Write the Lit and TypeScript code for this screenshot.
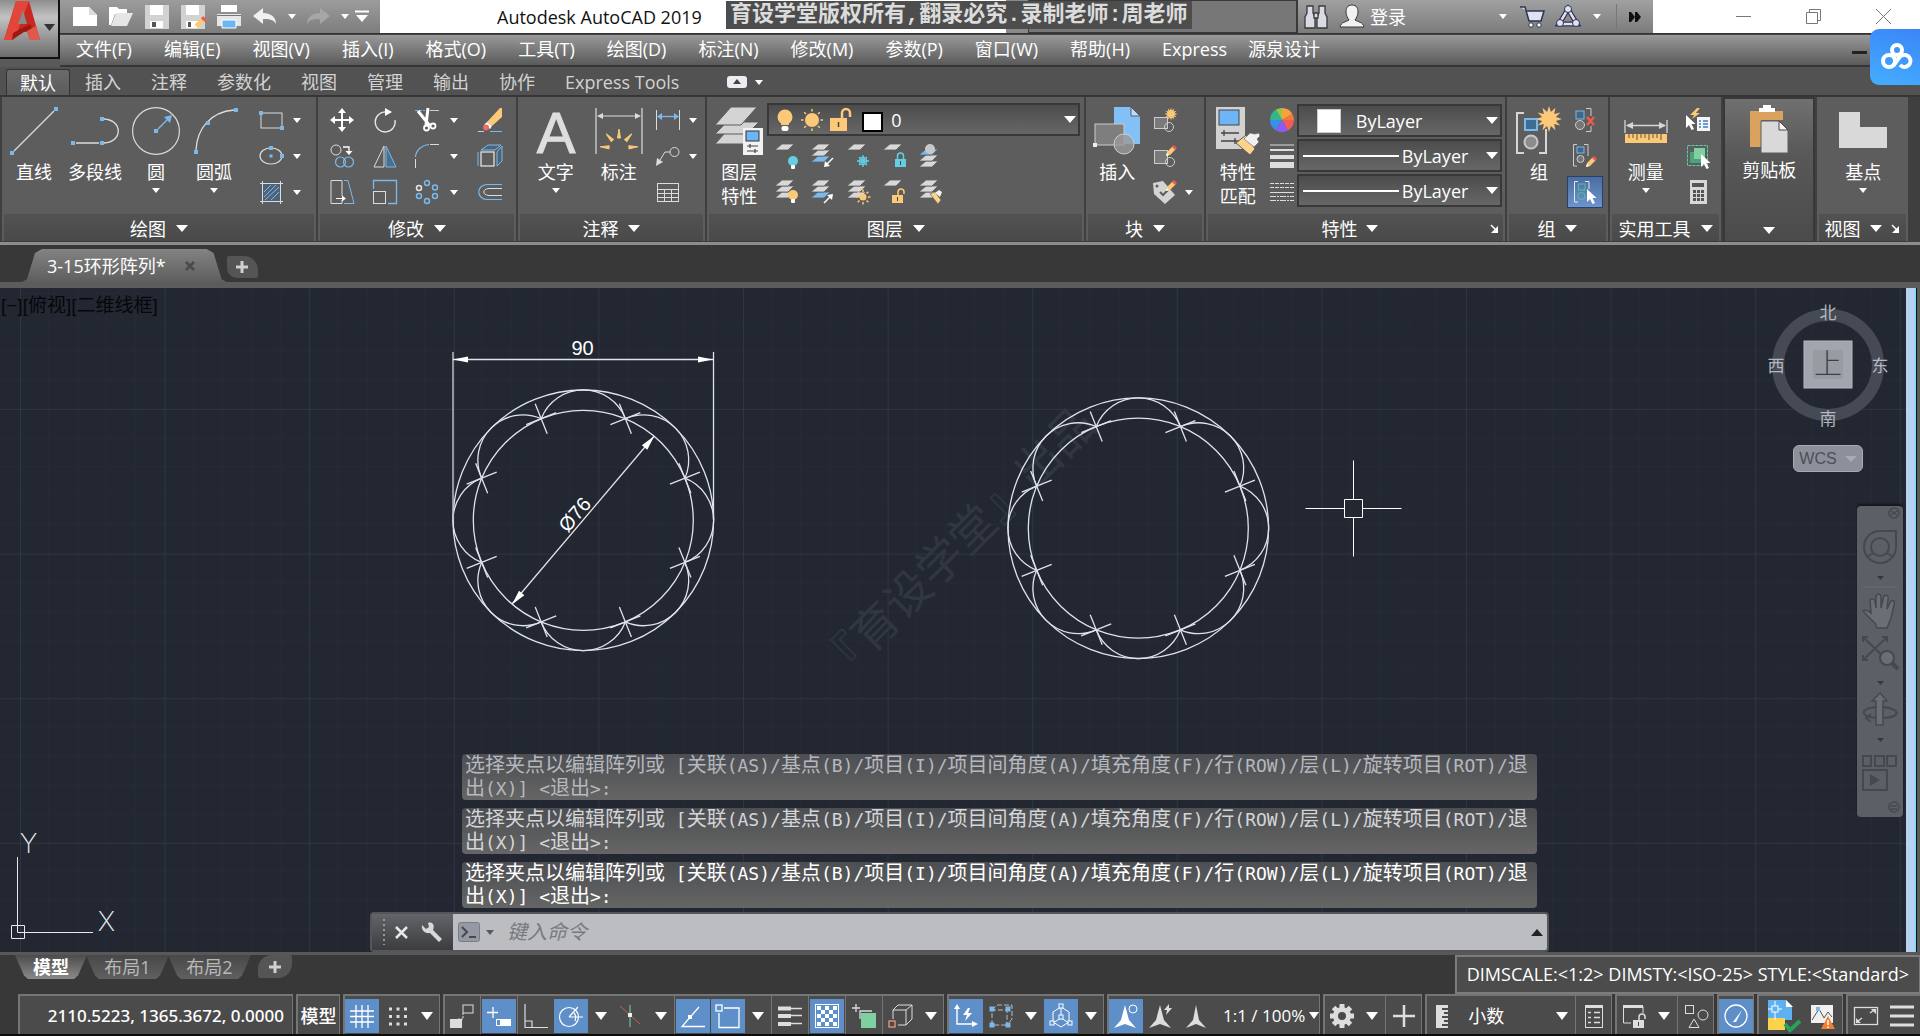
import { LitElement, html, svg, css, nothing } from "lit";
import { customElement } from "lit/decorators.js";
import { classMap } from "lit/directives/class-map.js";

/* ---------- small drawing helpers ---------- */
const sq = (x: number, y: number, s = 4) => svg`<rect x=${x - s / 2} y=${y - s / 2} width=${s} height=${s} fill="#7ab9ee"/>`;
const sheet = (y: number, c = "#d8d8d8") => svg`<path d=${`M8 ${y}H20L14 ${y + 6}H1Z`} fill=${c} stroke="#5d5d5d" stroke-width=".8"/>`;
const sheets = svg`${sheet(12)}${sheet(6)}${sheet(0)}`;
const pencil = (x: number, y: number) => svg`<g transform=${`translate(${x} ${y})`}><path d="M0 11L1 7L7 1L10 4L4 10Z" fill="#fbc978"/><path d="M6 2L8 0L11 3L9 5Z" fill="#ee5b4c"/><path d="M0 11L1 8L3 10Z" fill="#fff"/></g>`;
const star = (x: number, y: number, r: number) => {
  const pts = Array.from({ length: 24 }, (_, i) => {
    const a = (i * Math.PI) / 12;
    const q = i % 2 ? r * 0.55 : r;
    return `${(x + q * Math.sin(a)).toFixed(1)},${(y - q * Math.cos(a)).toFixed(1)}`;
  }).join(" ");
  return svg`<polygon points=${pts} fill="#fbc978"/>`;
};
const cursor = (x: number, y: number) => svg`<path transform=${`translate(${x} ${y})`} d="M0 0V13L3 10L5.5 15L8 14L5.500 9H9.500Z" fill="#fff"/>`;
const lock = (x: number, y: number, c: string, open = false) => svg`<g transform=${`translate(${x} ${y})`}><rect x="0" y="6" width="11" height="8" fill=${c}/><path d=${open ? "M6 6V3a2.500 2.500 0 0 1 6 0V5" : "M2.500 6V3a3 3 0 0 1 6 0V6"} fill="none" stroke=${c} stroke-width="1.500"/><path d="M5.500 8V12" stroke="#444"/></g>`;
const bulb = (x: number, y: number, c: string) => svg`<circle cx=${x} cy=${y} r="5" fill=${c}/><rect x=${x - 2} y=${y + 4} width="4" height="4" rx="1" fill="#fff"/>`;
const rays = (x: number, y: number, r: number, c: string) => svg`<circle cx=${x} cy=${y} r=${r} fill=${c}/>${[0, 1, 2, 3, 4, 5, 6, 7].map(
  (i) => svg`<path d=${`M${x} ${y - r - 1.500}V${y - r - 4}`} stroke=${c} stroke-width="1.500" transform=${`rotate(${i * 45} ${x} ${y})`}/>`
)}`;

/* ---------- 48px ribbon icons ---------- */
const big: Record<string, unknown> = {
  line: svg`<path d="M4 44L44 4" stroke="#dcdcdc" stroke-width="1.300"/>${sq(46, 2)}${sq(2, 46)}`,
  pline: svg`<path d="M5 36H28M33 12C52 13 52 35 33 36" fill="none" stroke="#dcdcdc" stroke-width="1.300"/>${sq(2, 36)}${sq(31, 36)}${sq(31, 12)}`,
  circle: svg`<circle cx="24" cy="24" r="23.400" fill="none" stroke="#dcdcdc" stroke-width="1.200"/>${sq(24, 24)}<path d="M26 22L37 11" stroke="#7ab9ee" stroke-width="1.400"/><path d="M40 8L38 16L32 10Z" fill="#7ab9ee"/>`,
  arc: svg`<path d="M6 43C7 22 20 5 44 3" fill="none" stroke="#dcdcdc" stroke-width="1.300"/>${sq(6, 45)}${sq(18, 16)}${sq(46, 3)}`,
  text: svg`<text x="24" y="46" text-anchor="middle" font-family="Liberation Sans, sans-serif" font-size="58" fill="#dedede" stroke="#dedede">A</text>`,
  dim: svg`<path d="M1 1V47M47 1V47M4 9H44" stroke="#dcdcdc" stroke-width="1.200"/><path d="M2 9L8 6V12ZM46 9L40 6V12Z" fill="#dcdcdc"/><g fill="#fbc978">${[-86, -42, 0, 42, 86].map((a) => svg`<path d="M22.500 31L24 22L25.500 31Z" stroke="#fbc978" transform=${`rotate(${a} 24 41)`}/>`)}</g>`,
  layers: svg`<g fill="#d4d4d4" stroke="#5d5d5d"><path d="M10 26H42L32 37H0Z"/><path d="M12 15H44L32 27H0Z"/><path d="M16 0H42L26 18H0Z"/></g><rect x="28" y="21" width="20" height="27" fill="#f2f2f2"/><rect x="31" y="24" width="13" height="10" fill="#6cb6f5" stroke="#333"/><path d="M32 39H43M32 44H43M35 37V41M40 42V46" stroke="#444" stroke-width="1.200"/>`,
  insert: svg`<path d="M21 0H38L47 9V37H21Z" fill="#82c0f6"/><path d="M38 0V9H47Z" fill="#b9dcfa" stroke="#5d5d5d"/><rect x="2" y="17" width="29" height="21" fill="#7e7e7e" stroke="#ccc"/><circle cx="31" cy="37" r="10" fill="#9a9a9a" fill-opacity=".8" stroke="#ccc"/><rect x="0" y="36" width="4" height="4" fill="#eee"/>`,
  match: svg`<rect x="2" y="0" width="29" height="42" fill="#d2d2d2"/><rect x="5" y="3" width="20" height="15" fill="#6cb6f5" stroke="#444"/><path d="M7 26H25M10 23V29M7 34H25M21 31V37" stroke="#444" stroke-width="1.300"/><path d="M22 36L32 28L41 42L36 48Z" fill="#fbd38a" stroke="#5d5d5d"/><path d="M30 32L36 26L41 27L45 26L46 29L43 32L45 35L40 40Z" fill="#f0f0f0" stroke="#5d5d5d" stroke-width=".6"/>`,
  group: svg`<path d="M9 6H2V46H9M24 46H31V22" fill="none" stroke="#d6d6d6" stroke-width="2"/><rect x="10" y="12" width="12" height="11" fill="#3f6c93" stroke="#79b8ea" stroke-width="2"/><circle cx="16" cy="35" r="6.500" fill="#8c8c8c" stroke="#c8c8c8" stroke-width="2"/>${star(34, 12, 13)}`,
  measure: svg`<path d="M3 13V26M45 13V26M5 18.500H43" stroke="#d6d6d6" stroke-width="1.300"/><path d="M4 18.500L11 15V22ZM44 18.500L37 15V22Z" fill="#d6d6d6"/><rect x="3" y="27" width="42" height="9" fill="#fbc978"/><path d="M7 27V31M11 27V31M15 27V33M19 27V31M23 27V31M27 27V33M31 27V31M35 27V31M39 27V33" stroke="#6b5430"/>`,
  paste: svg`<path d="M5 5H38V14H16V41H5Z" fill="#d9a35f"/><path d="M14 6V2H18V-1H26V2H30V6Z" fill="#fff"/><path d="M16 15H34L43 24V47H16Z" fill="#d9d9d9" stroke="#5d5d5d"/><path d="M34 15L43 24H34Z" fill="#f6f6f6" stroke="#444"/>`,
  base: svg`<path d="M0 5H21V20H48V41H0Z" fill="#d9d9d9"/>`,
};

/* ---------- 24px ribbon icons ---------- */
const small: Record<string, unknown> = {
  rect: svg`<rect x="2" y="5" width="21" height="15" fill="none" stroke="#dcdcdc"/>${sq(2, 5)}${sq(23, 20)}`,
  ellipse: svg`<ellipse cx="12" cy="12" rx="11" ry="8" fill="none" stroke="#dcdcdc" stroke-width="1.200"/>${sq(12, 4)}${sq(12, 12, 3)}${sq(23, 12)}`,
  hatch: svg`<rect x="4" y="4" width="17" height="17" fill="#4d6478"/><path d="M5 12L12 5M5 17L17 5M6 20L20 7M12 20L20 12" stroke="#7ab9ee"/><path d="M1 3.500H24M1 21.500H24M3.500 1V24M21.500 1V24" stroke="#dcdcdc"/>`,
  move: svg`<path d="M12 3V21M3 12H21" stroke="#fff" stroke-width="2"/><path d="M12 0L16 5H8ZM12 24L16 19H8ZM0 12L5 8V16ZM24 12L19 8V16Z" fill="#fff"/>`,
  rotate: svg`<path d="M13 4A10 10 0 1 0 22 12" fill="none" stroke="#e8e8e8" stroke-width="1.300"/><path d="M12 0L19 4L12 8Z" fill="#fff"/>`,
  trim: svg`<path d="M0 2.500H10" stroke="#7ab9ee" stroke-dasharray="3 1"/><path d="M15 2.500H24" stroke="#ccc"/><path d="M3 3L15 18M13 0L11 17" stroke="#fff" stroke-width="3"/><circle cx="11.500" cy="20" r="2.500" fill="none" stroke="#fff" stroke-width="1.800"/><circle cx="18" cy="18" r="2.500" fill="none" stroke="#fff" stroke-width="1.800"/>`,
  erase: svg`<path d="M9 14L22 0H24V9L14 18Z" fill="#fbc978"/><path d="M9 14L14 18L12 21L6 17Z" fill="#fff"/><circle cx="8" cy="19.500" r="3" fill="#ee6a62"/><path d="M0 23.500H6" stroke="#ccc"/><path d="M12 23.500H24" stroke="#7ab9ee"/>`,
  copy: svg`<circle cx="6" cy="6" r="5" fill="none" stroke="#dcdcdc"/><path d="M13 3H19V8" fill="none" stroke="#fff" stroke-width="1.300"/><path d="M15.500 7H22.500L19 11Z" fill="#fff"/><circle cx="10.500" cy="18" r="5" fill="none" stroke="#7ab9ee" stroke-width="1.200"/><circle cx="18.500" cy="18" r="5" fill="none" stroke="#7ab9ee" stroke-width="1.200"/>`,
  mirror: svg`<path d="M11 2V23H1Z" fill="none" stroke="#dcdcdc"/><path d="M13 2V23H23Z" fill="#48718f" stroke="#7ab9ee"/>`,
  fillet: svg`<path d="M15 .500H24M.500 15V24" stroke="#dcdcdc"/><path d="M.500 13C1 6 7 1 14 .500" fill="none" stroke="#7ab9ee" stroke-width="1.200"/>`,
  box3d: svg`<path d="M3 6L10 1H23L17 6ZM19 8L24 2V17L19 22ZM0 8V22" fill="#4d6478" stroke="#7ab9ee"/><rect x="3" y="8" width="13" height="14" fill="#5d5d5d" stroke="#e0e0e0" stroke-width="1.300"/>`,
  stretch: svg`<path d="M1 .500H12V16M12 20V23.500H1V.500" fill="none" stroke="#dcdcdc"/><path d="M14 .500H18L24 23.500H14" fill="none" stroke="#7ab9ee"/><path d="M6 18.500H13" stroke="#fff"/><path d="M12 15.500L16 18.500L12 21.500Z" fill="#fff"/>`,
  scale: svg`<path d="M.500 9V.500H23.500V23.500H15" fill="none" stroke="#7ab9ee" stroke-width="1.300"/><rect x=".500" y="11.500" width="12" height="12" fill="none" stroke="#dcdcdc"/>`,
  array: svg`<g fill="none" stroke="#7ab9ee" stroke-width="1.500"><circle cx="12" cy="3" r="2.500"/><circle cx="20" cy="7.500" r="2.500"/><circle cx="20" cy="16" r="2.500"/><circle cx="12" cy="21" r="2.500"/><circle cx="4" cy="16" r="2.500"/><circle cx="4" cy="8" r="2.500" stroke="#e6e6e6"/></g>`,
  offset: svg`<path d="M24 4.500H9C-2 5-2 19 9 19.500H24" fill="none" stroke="#7ab9ee" stroke-width="1.200"/><path d="M24 8.500H11C4 9 4 15 11 15.500H24" fill="none" stroke="#dcdcdc"/>`,
  linear: svg`<path d="M.500 2V22M23.500 2V22" stroke="#dcdcdc"/><path d="M4 8.500H20" stroke="#7ab9ee" stroke-width="1.300"/><path d="M1 8.500L6 5V12ZM23 8.500L18 5V12Z" fill="#7ab9ee"/>`,
  leader: svg`<circle cx="18.500" cy="8" r="4.500" fill="none" stroke="#dcdcdc"/><path d="M14 8H9L4 16" fill="none" stroke="#dcdcdc"/><path d="M0 22L1 14L7 18Z" fill="#dcdcdc"/>`,
  table: svg`<rect x="1.500" y="3.500" width="21" height="18" fill="none" stroke="#dcdcdc"/><path d="M1 9.500H23M1 13.500H23M1 17.500H23M8.500 9V21M15.500 9V21" stroke="#dcdcdc"/>`,
  lyOff: svg`${sheet(0)}${bulb(19, 17, "#63cfe0")}`,
  lyIso: svg`${sheet(12, "#7ab9ee")}${sheet(6)}${sheet(0)}<path d="M23 14L16 21" stroke="#fff" stroke-width="1.500"/><path d="M14 23L15 17L20 22Z" fill="#fff"/>`,
  lyFrz: svg`${sheet(0)}<g stroke="#63cfe0" stroke-width="1.300" fill="none"><circle cx="17" cy="17" r="3.500"/><path d="M17 11V23M11 17H23M13 13L21 21M21 13L13 21"/></g>`,
  lyLock: svg`${sheet(0)}${lock(13, 9, "#63cfe0")}`,
  lyCur: svg`${sheet(17)}${sheet(11)}${sheet(5, "#7ab9ee")}<circle cx="12" cy="5" r="5" fill="#c8c8c8"/>`,
  lyOn: svg`${sheets}${bulb(19, 15, "#fbc978")}`,
  lyUni: svg`${sheet(12, "#7ab9ee")}${sheet(6)}${sheet(0)}<path d="M14 23L21 16" stroke="#fff" stroke-width="1.500"/><path d="M23 14L22 20L17 15Z" fill="#fff"/>`,
  lyThaw: svg`${sheets}${rays(17, 17, 3.500, "#fbc978")}`,
  lyUnl: svg`${sheet(0)}${lock(10, 9, "#fbc978", true)}`,
  lyMatch: svg`${sheets}<path d="M12 14L17 12L23 20L20 24Z" fill="#fbd38a" stroke="#5d5d5d" stroke-width=".6"/><path d="M17 13L21 10L24 12L22 17Z" fill="#f0f0f0"/>`,
  blkNew: svg`<rect x="1.500" y="9.500" width="13" height="11" fill="#7a7a7a" stroke="#ccc"/><circle cx="16" cy="19" r="4.500" fill="none" stroke="#ccc"/>${star(18, 6, 6.500)}`,
  blkEdit: svg`<rect x="1.500" y="6.500" width="13" height="13" fill="#7a7a7a" stroke="#ccc"/><circle cx="17" cy="18" r="4.500" fill="none" stroke="#ccc"/>${pencil(13, 1)}`,
  blkAttr: svg`<path d="M0 3L10 1L22 15L12 24L1 14Z" fill="#d4d4d4"/><circle cx="4" cy="6" r="1.500" fill="#5d5d5d"/><path d="M7 12L10 15L15 10" fill="none" stroke="#5d5d5d" stroke-width="2"/>${pencil(13, 0)}`,
  wheel: svg`<path d="M12 12V0A12 12 0 0 1 22.400 6Z" fill="#f8a23c"/><path d="M12 12L22.400 6A12 12 0 0 1 24 12Z" fill="#f07a3c"/><path d="M12 12H24A12 12 0 0 1 18 22.400Z" fill="#f25c54"/><path d="M12 12L18 22.400A12 12 0 0 1 6 22.400Z" fill="#8b5cf0"/><path d="M12 12L6 22.400A12 12 0 0 1 0 12Z" fill="#3b8de8"/><path d="M12 12H0A12 12 0 0 1 6 1.600Z" fill="#35b58c"/><path d="M12 12L6 1.600A12 12 0 0 1 12 0Z" fill="#8fc94c"/>`,
  weights: svg`<path d="M0 1H24" stroke="#ddd"/><path d="M0 6H24" stroke="#ddd" stroke-width="2"/><path d="M0 13H24" stroke="#ddd" stroke-width="4"/><path d="M0 21H24" stroke="#ddd" stroke-width="6"/>`,
  types: svg`<path d="M0 3.500H24M0 7.500H24" stroke="#ddd" stroke-dasharray="4 1"/><path d="M0 12.500H24" stroke="#ddd"/><path d="M0 16.500H24M0 20.500H24" stroke="#ddd" stroke-dasharray="6 1 2 1"/>`,
  ungroup: svg`<path d="M13 .500H18V8M18 18V23.500H13" fill="none" stroke="#ccc"/><rect x="3" y="3" width="8" height="8" fill="#3e6788" stroke="#7ab9ee"/><circle cx="7" cy="17" r="4.500" fill="#777" stroke="#ccc"/><path d="M14 9L21 17M21 9L14 17" stroke="#ee5b4c" stroke-width="2.500"/>`,
  grpEdit: svg`<path d="M4 .500H.500V22H4M11 .500H15V12" fill="none" stroke="#ccc"/><rect x="4" y="3" width="7" height="6" fill="#3e6788" stroke="#7ab9ee"/><circle cx="7.500" cy="15" r="3.500" fill="#777" stroke="#ccc"/>${pencil(13, 12)}`,
  grpSel: svg`<path d="M5 1.500H1.500V22H5M12 1.500H16V9" fill="none" stroke="#e6e6e6"/><rect x="5.500" y="4" width="6.500" height="6" fill="none" stroke="#4fc3a0"/><circle cx="8.500" cy="16" r="3.500" fill="none" stroke="#4fc3a0"/>${cursor(14, 9)}`,
  quick: svg`<rect x="11" y="9" width="13" height="14" fill="#f4f4f4"/><path d="M13 13H15M13 16H15M13 19H15M17 13H22M17 16H22M17 19H22" stroke="#3b7fc4" stroke-width="1.500"/>${cursor(0, 7)}<path d="M11 0L4 7H8L6 11L14 5H10L14 0Z" fill="#fbc978"/>`,
  selAll: svg`<rect x="1.500" y="1.500" width="20" height="20" fill="none" stroke="#5fd0a0" stroke-dasharray="3 1"/><rect x="4" y="8" width="12" height="11" fill="#4aa37a"/><rect x="8" y="4" width="11" height="11" fill="#7ed0a0"/>${cursor(15, 10)}`,
  calc: svg`<rect x="4" y="0" width="17" height="24" fill="#d8d8d8"/><rect x="6" y="3" width="12" height="4" fill="#555"/><g fill="#555">${[10, 14, 18].map((y) => [7, 11, 15].map((x) => svg`<rect x=${x} y=${y} width="3" height="3"/>`))}</g>`,
};

/* ---------- status bar and title icons, 24px ---------- */
const ui: Record<string, unknown> = {
  grid: svg`<path d="M0 7H24M0 12.500H24M0 18H24M6 1V24M12 1V24M18 1V24" stroke="#fff" stroke-width="1.300"/>`,
  dots: svg`<path d="M4 5H22M4 12.500H22M4 20H22" stroke="#ddd" stroke-width="3" stroke-dasharray="3 4.500"/>`,
  infer: svg`<rect x="13" y="1" width="10" height="8" fill="none" stroke="#ddd"/><path d="M13 9V15H7" fill="none" stroke="#ddd" stroke-dasharray="2 1"/><rect x="0" y="15" width="12" height="9" fill="#ddd"/>`,
  dyn: svg`<path d="M6 3V14M0 8.500H11" stroke="#fff" stroke-width="1.300"/><rect x="9" y="15" width="15" height="7" fill="#fff"/><rect x="10" y="16" width="3" height="5" fill="#5f8fc8"/>`,
  ortho: svg`<path d="M1 0V23.500H24M1 17H8V23" fill="none" stroke="#ddd" stroke-width="1.200"/>`,
  polar: svg`<circle cx="10" cy="13" r="9.500" fill="none" stroke="#fff" stroke-width="1.200"/><path d="M10 13H24M10 13L19 3M15 9C17 11 17 14 16 17" fill="none" stroke="#fff" stroke-width="1.200"/>`,
  iso: svg`<path d="M1 2L21 20" stroke="#c65d5d"/><path d="M11 1V23" stroke="#5fae7c" stroke-width="1.500"/><rect x="9" y="9" width="4" height="4" fill="#eee"/>`,
  track: svg`<path d="M24 22.500H1L18 3" fill="none" stroke="#fff" stroke-width="1.300"/><rect x="7" y="11" width="4" height="4" fill="#fff"/>`,
  osnap: svg`<path d="M8 4H23V23.500H3V9" fill="none" stroke="#fff" stroke-width="1.300"/><rect x="0" y="1" width="6" height="6" fill="none" stroke="#fff" stroke-width="1.300"/>`,
  lwt: svg`<path d="M0 4.500H13M0 12H13M0 20H13" stroke="#ddd" stroke-width="4"/><path d="M13 4.500H24M13 11.500H24M13 19.500H24" stroke="#ddd" stroke-width="1.300"/>`,
  trans: svg`<rect x=".500" y=".500" width="23" height="23" fill="none" stroke="#fff"/><g fill="#fff">${[0, 1, 2, 3, 4].map((r) => [0, 1, 2, 3, 4].map((c) => ((r + c) % 2 ? nothing : svg`<rect x=${2 + c * 4} y=${2 + r * 4} width="4" height="4"/>`)))}</g>`,
  cycle: svg`<path d="M4 0V8M0 4H8M8 15V7H20" fill="none" stroke="#ddd" stroke-width="1.300"/><rect x="9" y="9" width="15" height="15" fill="#7ed0a0"/>`,
  cube: svg`<path d="M4 6L9 1H23V15L17 21M4 15V6H17V21H9M17 6L23 1" fill="none" stroke="#ddd"/><rect x="0" y="17" width="6" height="6" fill="none" stroke="#e89b7a" stroke-width="1.300"/>`,
  ucs: svg`<path d="M3 3V20H21" fill="none" stroke="#fff" stroke-width="1.400"/><path d="M3 0L6 5H0ZM24 20L18 17V23Z" fill="#fff"/><path d="M14 4L9 11H13L11 17L18 9H14L16 4Z" fill="#fff"/>`,
  filter: svg`<path d="M3 6L8 1H23V15L18 21V6H3V21H18M18 6L23 1" fill="none" stroke="#bbb" stroke-dasharray="5 2"/>${sq(3, 5, 5)}${sq(19, 5, 5)}${sq(3, 21, 5)}${sq(19, 21, 5)}`,
  gizmo: svg`<path d="M12 3L20 8V18L12 23L4 18V8ZM12 3V14M12 14L4 19M12 14L20 19" fill="none" stroke="#fff"/><g fill="#5f8fc8" stroke="#fff"><rect x="10" y="0" width="4" height="4"/><rect x="1" y="17" width="4" height="4"/><rect x="19" y="17" width="4" height="4"/><rect x="10" y="11" width="4" height="4"/></g>`,
  annoA: svg`<path d="M11 1L15 16L22 24L11 20L0 24L7 16Z" fill="#fff"/><circle cx="19" cy="5" r="4" fill="none" stroke="#fff"/>`,
  annoB: svg`<path d="M11 1L15 16L22 24L11 20L0 24L7 16Z" fill="#ddd"/><path d="M20 0L15 6H18L17 11L23 4H20Z" fill="#ddd"/>`,
  annoC: svg`<path d="M12 1L15 16L22 24L12 20L2 24L9 16Z" fill="#ddd"/>`,
  gear: svg`<circle cx="12" cy="12" r="6.500" fill="none" stroke="#ddd" stroke-width="5"/><g stroke="#ddd" stroke-width="5">${[0, 45, 90, 135].map((a) => svg`<path d="M12 0V5M12 19V24" transform=${`rotate(${a} 12 12)`}/>`)}</g>`,
  plus: svg`<path d="M12 1V23M1 12H23" stroke="#ddd" stroke-width="2.500"/>`,
  ruler: svg`<path d="M6 1H18V4H12V6H18V8H14V10H18V12H12V14H18V16H14V18H18V20H12V22H18V24H6Z" fill="#ddd"/>`,
  props: svg`<rect x="3.500" y="1.500" width="17" height="22" fill="none" stroke="#ddd"/><path d="M3 2.500H21" stroke="#ddd" stroke-width="3"/><path d="M6 8.500H9M6 13.500H9M6 18.500H9M12 8.500H18M12 13.500H18M12 18.500H18" stroke="#ddd" stroke-width="1.500"/>`,
  uilock: svg`<path d="M1.500 1V19H9M1 2.500H21V9" fill="none" stroke="#ddd"/><path d="M1 2.500H21" stroke="#ddd" stroke-width="3"/>${lock(11, 10, "#ddd", true)}`,
  shapes: svg`<rect x="1.500" y="1.500" width="8" height="8" fill="none" stroke="#ddd"/><circle cx="19" cy="11" r="5" fill="none" stroke="#ddd"/><path d="M10 15L15 23.500H5Z" fill="none" stroke="#ddd"/>`,
  gauge: svg`<circle cx="12" cy="12" r="11" fill="none" stroke="#fff" stroke-width="1.300"/><path d="M9 18L18 6L12 18Z" fill="#fff"/>`,
  sync: svg`<path d="M0 -4H18L24 2V16H0Z" fill="#5fb0f0"/><path d="M18 -4V3H25Z" fill="#fff"/><path d="M0 14H17V26H0Z" fill="#fbd24a"/><path d="M7 -3V16M0 5H14" stroke="#fff"/><rect x="4" y="2" width="6" height="6" fill="#5fb0f0" stroke="#fff"/><path d="M17 20L22 26L32 17" fill="none" stroke="#27a35a" stroke-width="4"/>`,
  warn: svg`<rect x="1" y="1" width="22" height="18" fill="#f0f0f0"/><path d="M2 16L9 5L14 14L18 8L22 13" fill="none" stroke="#555"/>${sq(8, 5)}<path d="M18 12L25 25H11Z" fill="#f08030"/><path d="M18 16V21M18 22.500V24" stroke="#fff" stroke-width="1.500"/>`,
  full: svg`<rect x=".500" y="3.500" width="23" height="17" fill="none" stroke="#ddd" stroke-width="1.300"/><path d="M16 9L20 6M8 14L4 17" stroke="#ddd" stroke-width="1.300"/><path d="M22 5V10L17 5ZM2 19V14L7 19Z" fill="#ddd"/>`,
  burger: svg`<path d="M0 3H24M0 12H24M0 21H24" stroke="#ddd" stroke-width="3"/>`,
  fnew: svg`<path d="M0 2H16L24 10V21H0Z" fill="#fff"/><path d="M16 2V10H24Z" fill="#ddd"/>`,
  fopen: svg`<path d="M0 2H8L10 4H18V9H6L2 20H0Z" fill="#fff"/><path d="M7 8H24L18 21H2Z" fill="#e6e6e6"/>`,
  fsave: svg`<path d="M0 0H24V24H0Z" fill="#d2d2d2"/><path d="M5 0H18V10H5Z" fill="#fff"/><path d="M5 16H18V23H5Z" fill="#fff"/><path d="M7 17H11V22H7Z" fill="#555"/>`,
  fsaveas: svg`<path d="M0 0H24V24H0Z" fill="#d2d2d2"/><path d="M5 0H18V10H5Z" fill="#fff"/><path d="M5 16H18V23H5Z" fill="#fff"/><path d="M7 17H10V22H7Z" fill="#555"/><g transform="translate(13 11) scale(1.150)">${pencil(0, 0)}</g>`,
  fprint: svg`<path d="M4 0H20V7H4Z" fill="#fff"/><path d="M0 9H24V21H0Z" fill="#e6e6e6"/><path d="M0 10.500H24" stroke="#777"/><path d="M5 15H19V23H5Z" fill="#6cb6f5" stroke="#fff"/>`,
  undo: svg`<path d="M0 11L10 3V8C18 8 23 12 23 19C20 14 16 14 10 14V19Z" fill="#f0f0f0"/>`,
  redo: svg`<path d="M24 11L14 3V8C6 8 1 12 1 19C4 14 8 14 14 14V19Z" fill="#a6a6a6"/>`,
  find: svg`<g fill="#d8dae6" stroke="#3a3a3a" stroke-width="1.300"><path d="M3 1H9V8L11 12V23H1V12L3 8ZM15 1H21V8L23 12V23H13V12L15 8Z"/><path d="M10 8H14V13H10Z"/></g>`,
  user: svg`<path d="M12 0C17 0 18 4 18 7C18 11 16 13 15 15C18 17 23 17 24 22H0C1 17 6 17 9 15C8 13 6 11 6 7C6 4 7 0 12 0Z" fill="#f2f2f2" stroke="#3a3a3a"/>`,
  cart: svg`<path d="M0 2H5L9 16H21L24 6H7" fill="#dfe2f2" stroke="#2e3350" stroke-width="1.500"/><circle cx="11" cy="20" r="2.200" fill="#fff" stroke="#2e3350"/><circle cx="19" cy="20" r="2.200" fill="#fff" stroke="#2e3350"/>`,
  a360: svg`<path d="M12 4L21 19H3Z" fill="none" stroke="#2e3350" stroke-width="5"/><path d="M12 4L21 19H3Z" fill="none" stroke="#dfe2f2" stroke-width="2.500"/><g fill="#dfe2f2" stroke="#2e3350"><circle cx="12" cy="4" r="3.500"/><circle cx="4" cy="18" r="3.500"/><circle cx="20" cy="18" r="3.500"/></g>`,
};

const icon24 = (body: unknown) => html`<svg class="i24" viewBox="0 0 24 24" aria-hidden="true">${body}</svg>`;
const icon48 = (body: unknown) => html`<svg class="i48" viewBox="0 0 48 48" aria-hidden="true">${body}</svg>`;
const caret = html`<i class="car"></i>`;

const bigBtn = (name: string, lines: string[], drop = false) => html`
  <button class="big">${icon48(big[name])}<span>${lines.map((l) => html`<span class="ln">${l}</span>`)}</span>${drop ? caret : nothing}</button>`;
const sm = (name: string, label: string, on = false) => html`<button class=${classMap({ sm: true, on })} aria-label=${label}>${icon24(small[name])}</button>`;
const dropBtn = (label: string) => html`<button class="dd" aria-label=${label}>${caret}</button>`;

/* Latin runs of the command history use the monospaced face, Chinese runs the CJK one. */
const mixed = (t: string) => t.split(/([\x20-\x7e]+)/).map((p, i) => (i % 2 ? html`<span class="mono">${p}</span>` : p));

/* One array of eight arcs between two concentric circles. */
const R = 130.300;
const r = 110;
const rosette = (cx: number, cy: number) => {
  const nodes = Array.from({ length: 8 }, (_, i) => {
    const a = ((22.500 + 45 * i) * Math.PI) / 180;
    return [r * Math.cos(a), r * Math.sin(a)];
  });
  return svg`<g transform=${`translate(${cx} ${cy})`} fill="none" stroke="#dfe3ee" stroke-width="1.300">
    <circle r=${R}/><circle r=${r}/>
    ${nodes.map(([x, y], i) => {
      const [u, v] = nodes[(i + 1) % 8];
      return svg`<path d=${`M${x} ${y}A45.200 45.200 0 0 1 ${u} ${v}`}/><path d=${`M${x - 15} ${y + 6}l30 -12M${x - 6} ${y - 15}l12 30`}/>`;
    })}
  </g>`;
};

const HISTORY = "选择夹点以编辑阵列或 [关联(AS)/基点(B)/项目(I)/项目间角度(A)/填充角度(F)/行(ROW)/层(L)/旋转项目(ROT)/退";

@customElement("app-root")
export class AppRoot extends LitElement {
  static styles = css`
    :host { display: flex; flex-direction: column; height: 100vh; overflow: hidden; background: #383838; color: #fff;
      font: 18px/24px "Open Sans", "Noto Sans CJK SC", sans-serif; }
    * { box-sizing: border-box; }
    button, input, select { font: inherit; color: inherit; background: none; border: 0; padding: 0; margin: 0; outline: 0; border-radius: 0; }
    select { appearance: none; }
    a { color: inherit; text-decoration: none; }
    button { display: flex; align-items: center; justify-content: center; }
    svg { display: block; overflow: visible; flex: none; }
    .i24 { width: 24px; height: 24px; }
    .i48 { width: 48px; height: 48px; }
    .car { width: 0; height: 0; border: 4px solid transparent; border-top: 5px solid #fff; border-bottom: 0; flex: none; }
    .car.l { border-width: 7px 6px 0; }

    .head { display: grid; grid-template-columns: 60px 1fr; grid-template-rows: 34px 33px; flex: none; position: relative; background: #5a5a5a; }
    .logo { grid-row: 1 / 3; align-self: start; width: 60px; height: 59px; background: linear-gradient(#8e8e8e, #c2c2c2 30%, #6d6d6d); border: solid #111; border-width: 0 2px 2px 0; }
    .title { display: flex; background: #fff; border-bottom: 1px solid #333; min-width: 0; }
    .qat { display: flex; align-items: center; width: 320px; padding-left: 7px; background: linear-gradient(#9c9c9c, #7d7d7d); }
    .qat button { width: 36px; height: 32px; }
    .qat .nar { width: 17px; }
    .app { flex: 1; color: #111; padding: 5px 0 0 117px; white-space: nowrap; }
    .search { width: 292px; background: #8a8a8a; padding-left: 22px; }
    .search input { width: 100%; height: 33px; background: #777; border: 1px solid #3a3a3a; border-right-width: 2px; }
    .info { display: flex; align-items: center; width: 355px; background: linear-gradient(#a0a0a0, #7c7c7c); }
    .info button { width: 36px; height: 32px; }
    .info .login { width: auto; margin-right: 86px; }
    .info .nar { width: 22px; }
    .info .vr { width: 1px; height: 26px; background: #777; margin: 0 8px; }
    .info .more { width: 20px; color: #111; }
    .win { display: flex; align-items: center; width: 267px; padding-left: 55px; }
    .win button { width: 70px; height: 32px; }
    .mark { position: absolute; left: 726px; top: 1px; height: 28px; padding: 1px 4px 0; background: #4d4d4d; color: #dcdcdc; font: bold 22px/28px "Liberation Mono", "Noto Sans CJK SC", monospace; white-space: pre; }
    .menu { display: flex; align-items: center; gap: 32px; padding: 0 50px 2px 16px; background: linear-gradient(#999, #5a5a5a); border-bottom: 2px solid #363636; border-top: 1px solid #444; white-space: nowrap; }
    .plug { display: flex; gap: 21px; }
    .menu .min { width: 15px; height: 3px; background: #222; margin: 6px 3px 0 auto; }
    .pan { position: absolute; right: 0; top: 29px; width: 50px; height: 56px; border-radius: 9px 0 0 9px; background: linear-gradient(15deg, #45aeff, #3a85f8); z-index: 2; }

    .tabs { display: flex; align-items: flex-end; flex: none; height: 30px; padding-left: 6px; background: #525252; border-bottom: 2px solid #363636; color: #d2d2d2; white-space: nowrap; }
    .tabs button { height: 26px; padding: 0 15px; }
    .tabs .sel { width: 64px; padding: 0; background: linear-gradient(#6a6a6a, #5c5c5c); border: 1px solid #333; border-bottom: 0; border-radius: 3px 3px 0 0; color: #fff; }
    .tabs .fold { margin-left: 33px; gap: 8px; padding: 0; }

    .ribbon { display: flex; gap: 2px; flex: none; height: 148px; padding: 0 12px 0 2px; background: #3f3f3f; border-bottom: 3px solid #8c8c8c; }
    .panel { display: flex; flex-direction: column; min-width: 0; background: #5d5d5d; border-bottom: 1px solid #3c3c3c; }
    .body { flex: 1; display: flex; padding: 5px 0 0 8px; gap: 10px; }
    .cap { display: flex; align-items: center; justify-content: center; gap: 10px; height: 27px; margin: 0 2px; padding-top: 2px; background: linear-gradient(#525252, #4a4a4a); white-space: nowrap; }
    .draw { flex: 315; } .modify { flex: 198; } .anno { flex: 188; } .layer { flex: 378; } .block { flex: 118; }
    .prop { flex: 300; } .grp { flex: 101; } .util { flex: 112; } .clip { flex: 88; } .view { flex: 91; }
    .big { flex-direction: column; justify-content: flex-start; min-width: 48px; padding-top: 5px; }
    .big .ln { display: block; line-height: 24px; white-space: nowrap; }
    .big > span { margin-top: 5px; }
    .big .car { margin-top: 4px; }
    .sm { width: 28px; height: 36px; }
    .sm.on { width: 36px; height: 32px; margin: 2px 0; background: linear-gradient(#4c6ca0, #6d94cc); border: 1px solid #25406c; }
    .dd { width: 20px; height: 36px; }
    .cols { display: grid; grid-auto-rows: 36px; align-content: start; align-items: center; justify-items: center; }
    .c-draw { grid-template-columns: 28px 24px; margin-left: 9px; }
    .c-mod { grid-template-columns: 43px 43px 41px 14px 58px; }
    .modify .body { padding-left: 2px; }
    .anno .body { padding-left: 14px; gap: 15px; }
    .c-anno { grid-template-columns: 28px 22px; margin-left: -4px; }
    .layer .body { gap: 4px; }
    .lyr { flex: 1; padding-right: 4px; }
    .lyr .row { display: flex; gap: 8px; padding-left: 5px; }
    .combo { display: flex; align-items: center; height: 33px; background: linear-gradient(#4c4c4c, #676767); border: 2px solid #383838; padding-right: 2px; }
    .combo select { flex: 1; min-width: 0; height: 29px; padding: 0; }
    .lyr .combo { margin: 1px 0 2px; padding-left: 4px; gap: 3px; height: 33px; }
    .sw { width: 21px; height: 20px; background: #fff; border: 2px solid #000; margin: 4px 5px 0 8px; }
    .block .body { padding-left: 7px; }
    .c-blk { grid-template-columns: 28px 20px; }
    .prop .body { gap: 6px; }
    .c-prop { grid-template-columns: 28px; }
    .combos { flex: 1; display: flex; flex-direction: column; gap: 2px; padding: 2px 3px 0 0; margin-left: -5px; }
    .csw { width: 24px; height: 24px; background: #fff; border: 1px solid #ccc; margin: 0 15px 0 18px; }
    .cln { width: 96px; height: 2px; background: #fff; margin: 0 3px 0 4px; }
    .grp .body { gap: 4px; }
    .util .body { padding-left: 12px; gap: 14px; }
    .c-one { grid-template-columns: 36px; }
    .util .c-one { grid-template-columns: 28px; }
    .clip { background: linear-gradient(#707070, #585858 40%, #4b4b4b); border: 2px solid #383838; border-bottom-width: 1px; display: flex; flex-direction: column; align-items: center; justify-content: flex-start; padding-top: 7px; }
    .clip > span { margin-top: 4px; white-space: nowrap; }
    .clip .car { margin: auto 0 7px; }
    .view .body { padding-left: 22px; }
    .view .cap, .prop .cap { gap: 9px; }
    .prop .cap .corner { margin: 0 0 0 auto; }
    .prop .cap .lead { margin: 0 0 0 auto; padding-left: 12px; }

    .files { display: flex; flex: none; height: 43px; padding: 4px 0 0 22px; border-bottom: 6px solid #5c5c5c; }
    .ftab { display: flex; align-items: center; gap: 19px; height: 33px; padding: 0 32px 0 25px; background: linear-gradient(#838383, #5e5e5e); clip-path: polygon(0 100%, 5px 92%, 13px 12%, 20px 0, calc(100% - 20px) 0, calc(100% - 13px) 12%, calc(100% - 5px) 92%, 100% 100%); white-space: nowrap; }
    .add { width: 31px; height: 22px; margin: 7px 0 0; background: #555; border-radius: 2px 14px 2px 10px; color: #ccc; }

    .canvas { flex: 1; min-height: 0; position: relative; background: #222732; }
    .sheet { position: absolute; inset: 0; width: 100%; height: 100%; }
    .edge { position: absolute; right: 0; top: 0; bottom: 0; width: 14px; background: linear-gradient(90deg, #b8d2f2 0 8px, #8fd8f8 8px 10px, #111 10px 11px, #5a5d5a 11px); }
    .vp { position: absolute; left: 1px; top: 6px; color: #05070b; font: 19px/24px "Liberation Sans", "Noto Sans CJK SC", sans-serif; }
    .cubebox { position: absolute; right: 32px; top: 10px; width: 120px; display: flex; flex-direction: column; align-items: center; gap: 13px; }
    .wcs { width: 70px; height: 27px; gap: 8px; border-radius: 6px; background: #8d909a; border: 1px solid #a9abb4; color: #4b4f58; font: 16px/20px "Liberation Sans", sans-serif; }
    .wcs .car { border-width: 6px 6px 0; border-top-color: #a9acb6; }
    .nav { position: absolute; right: 17px; top: 218px; width: 46px; height: 311px; border-radius: 4px; background: #5b5f66; box-shadow: 0 -2px 2px #14161c; }
    .cli { position: absolute; left: 370px; right: 371px; bottom: 0; }
    .hist { margin: 0 12px 8px 92px; height: 46px; padding: 0 0 0 3px; border-radius: 4px; background: linear-gradient(#4d4e52, #656565); font: 20px/23px "Liberation Sans", "Noto Sans CJK SC", sans-serif; white-space: nowrap; }
    .hist div { height: 23px; }
    .mono { font-family: "DejaVu Sans Mono", monospace; font-size: 18px; white-space: pre; }
    .h0 { color: #b5b8bf; } .h1 { color: #d3d5d8; }
    .h2 { margin-bottom: 4px; }
    .cmd { display: flex; height: 40px; border: 2px solid #54565c; border-radius: 4px; background: #bcbdc0; }
    .tool { display: flex; align-items: center; width: 81px; background: linear-gradient(#63656a, #3b3c3e); padding-left: 11px; gap: 8px; }
    .tool .grip { width: 2px; height: 26px; background: repeating-linear-gradient(#999 0 2px, transparent 2px 5px); }
    .tool button { width: 16px; }
    .tool button + button { width: 30px; }
    .cmd .pr { width: 46px; gap: 6px; }
    .pr .car { border-top-color: #55585e; }
    .cmd input { flex: 1; padding-left: 8px; color: #333; font: 20px/28px "Liberation Sans", "Noto Sans CJK SC", sans-serif; min-width: 0; }
    .cmd input::placeholder { color: #77797f; font-style: italic; opacity: 1; }
    .cmd .up { width: 20px; }
    .cmd .up .car { border: solid transparent; border-width: 0 6px 7px; border-bottom-color: #222; }

    .sheets { display: flex; flex: none; height: 42px; border-top: 3px solid #585858; padding-left: 15px; }
    .st { height: 24px; padding: 0 15px; min-width: 83px; color: #b8b8b8; background: linear-gradient(#484848, #606060); clip-path: polygon(0 0, 100% 0, calc(100% - 9px) 85%, calc(100% - 13px) 100%, 13px 100%, 9px 85%); margin-right: -1px; }
    .st.sel { width: 72px; min-width: 0; padding: 0; color: #fff; font-weight: bold; background: linear-gradient(#4c4c4c, #8a8a8a); }
    .sheets .add { margin: 0 0 0 8px; height: 23px; width: 34px; border-radius: 14px 2px 14px 2px; }
    .dimbox { margin-left: auto; border: 2px solid #7c7c7c; border-right-width: 1px; background: #4c4c4c; padding: 5px 10px 0; white-space: nowrap; }

    .status { display: flex; flex: none; height: 42px; gap: 3px; padding-left: 18px; border-bottom: 2px solid #0c0c0c; white-space: nowrap; }
    .g { display: flex; gap: 1px; border: 2px solid #757575; border-width: 2px 1px 0 2px; background: #4b4b4b; padding: 2px 0 1px; align-items: center; }
    .g button { width: 34px; height: 34px; }
    .g .on { background: #5f8fc8; }
    .g .cr { width: 24px; }
    .g .vr { width: 1px; align-self: stretch; margin: -2px 0 -1px; background: #757575; }
    .coord { width: 275px; justify-content: flex-end; padding-right: 8px; font-weight: 500; font-family: "Noto Sans", "Open Sans", sans-serif; font-size: 17px; }
    .g .mdl { width: 41px; font-weight: 500; }
    .g .scale { width: auto; padding: 0 0 0 9px; gap: 4px; font-size: 17px; }
    .unit { display: flex; align-items: center; flex: 1; padding-left: 3px; }
    .unit select { flex: 1; padding-left: 14px; min-width: 0; }
    .g.u { width: 187px; }
    .g.wide button { width: 41px; }
    .g.end { flex: 1; justify-content: space-around; border-right: 0; }
    .status .car { border-width: 7px 5px 0; }
    .status .cr .car { border-width: 8px 6px 0; }
  `;

  private cap(title: string) {
    return html`<button class="cap">${title}<i class="car l"></i></button>`;
  }

  private header() {
    const menus = ["文件(F)", "编辑(E)", "视图(V)", "插入(I)", "格式(O)", "工具(T)", "绘图(D)", "标注(N)", "修改(M)", "参数(P)", "窗口(W)", "帮助(H)"];
    const q = [["fnew", "新建"], ["fopen", "打开"], ["fsave", "保存"], ["fsaveas", "另存为"], ["fprint", "打印"]];
    return html`
      <header class="head">
        <button class="logo" aria-label="应用程序菜单">
          <svg width="58" height="57" viewBox="0 0 58 57" aria-hidden="true">
            <path d="M16 1H29L40 40H30L27 31H15L13 40H4Z" fill="#c8281f"/>
            <path d="M16 1H29L18 30L13 40H4Z" fill="#e2463a"/><path d="M23 10L27 24H18Z" fill="#8a8a8a"/>
            <path d="M13 33L30 24L33 31L24 32L12 40Z" fill="#9d1a14"/><path d="M27 31L36 26L40 40H30Z" fill="#e0584c"/>
            <path d="M44 24H55L49.500 31Z" fill="#333"/>
          </svg>
        </button>
        <div class="title">
          <div class="qat">
            ${q.map(([i, l]) => html`<button aria-label=${l}>${icon24(ui[i])}</button>`)}
            <button aria-label="放弃">${icon24(ui.undo)}</button><button class="nar" aria-label="放弃列表">${caret}</button>
            <button aria-label="重做">${icon24(ui.redo)}</button><button class="nar" aria-label="重做列表">${caret}</button>
            <button class="nar" aria-label="自定义"><svg width="14" height="14" viewBox="0 0 14 14"><path d="M0 1.500H14" stroke="#fff" stroke-width="2"/><path d="M1 5H13L7 12Z" fill="#fff"/></svg></button>
          </div>
          <div class="app">Autodesk AutoCAD 2019</div>
          <div class="search"><input aria-label="搜索"></div>
          <div class="info">
            <button aria-label="搜索帮助">${icon24(ui.find)}</button>
            <button aria-label="用户">${icon24(ui.user)}</button>
            <button class="login">登录</button>
            <button class="nar" aria-label="登录菜单">${caret}</button>
            <button aria-label="应用商店">${icon24(ui.cart)}</button>
            <button aria-label="保持连接">${icon24(ui.a360)}</button>
            <button class="nar" aria-label="连接菜单">${caret}</button>
            <i class="vr"></i>
            <button class="more" aria-label="更多"><svg width="12" height="10" viewBox="0 0 12 10"><path d="M0 0H2L6 5L2 10H0ZM6 0H8L12 5L8 10H6Z" fill="#111"/></svg></button>
          </div>
          <div class="win">
            <button aria-label="最小化"><svg width="15" height="15" viewBox="0 0 15 15"><path d="M0 7.500H15" stroke="#777"/></svg></button>
            <button aria-label="还原"><svg width="15" height="15" viewBox="0 0 15 15"><path d="M.500 3.500H11.500V14.500H.500ZM3.500 3V.500H14.500V11.500H12" fill="none" stroke="#777"/></svg></button>
            <button aria-label="关闭"><svg width="15" height="15" viewBox="0 0 15 15"><path d="M0 0L15 15M15 0L0 15" stroke="#777"/></svg></button>
          </div>
        </div>
        <nav class="menu">${menus.map((m) => html`<a href="#">${m}</a>`)}<span class="plug"><a href="#">Express</a><a href="#">源泉设计</a></span><i class="min"></i></nav>
        <div class="mark">育设学堂版权所有,翻录必究.录制老师:周老师</div>
        <button class="pan" aria-label="网盘">
          <svg width="32" height="32" viewBox="0 0 32 32" fill="none" stroke="#fff" stroke-width="4"><circle cx="18" cy="9" r="5"/><path d="M22 14L14 25"/><circle cx="10" cy="20" r="6"/><path d="M21 24A6 6 0 1 0 22 15"/></svg>
        </button>
      </header>
      <nav class="tabs">
        ${["默认", "插入", "注释", "参数化", "视图", "管理", "输出", "协作", "Express Tools"].map((t, i) => html`<button class=${classMap({ sel: i === 0 })}>${t}</button>`)}
        <button class="fold" aria-label="最小化功能区"><svg width="20" height="12" viewBox="0 0 20 12"><rect width="20" height="12" rx="3" fill="#ececf2"/><path d="M6 8L10 3L14 8Z" fill="#444"/></svg>${caret}</button>
      </nav>`;
  }

  private ribbon() {
    return html`<div class="ribbon">
      <section class="panel draw"><div class="body">
        ${bigBtn("line", ["直线"])}${bigBtn("pline", ["多段线"])}${bigBtn("circle", ["圆"], true)}${bigBtn("arc", ["圆弧"], true)}
        <div class="cols c-draw">${sm("rect", "矩形")}${dropBtn("矩形列表")}${sm("ellipse", "椭圆")}${dropBtn("椭圆列表")}${sm("hatch", "填充")}${dropBtn("填充列表")}</div>
      </div>${this.cap("绘图")}</section>
      <section class="panel modify"><div class="body"><div class="cols c-mod">
        ${sm("move", "移动")}${sm("rotate", "旋转")}${sm("trim", "修剪")}${dropBtn("修剪列表")}${sm("erase", "删除")}
        ${sm("copy", "复制")}${sm("mirror", "镜像")}${sm("fillet", "圆角")}${dropBtn("圆角列表")}${sm("box3d", "分解")}
        ${sm("stretch", "拉伸")}${sm("scale", "缩放")}${sm("array", "阵列")}${dropBtn("阵列列表")}${sm("offset", "偏移")}
      </div></div>${this.cap("修改")}</section>
      <section class="panel anno"><div class="body">
        ${bigBtn("text", ["文字"], true)}${bigBtn("dim", ["标注"])}
        <div class="cols c-anno">${sm("linear", "线性")}${dropBtn("线性列表")}${sm("leader", "引线")}${dropBtn("引线列表")}${sm("table", "表格")}</div>
      </div>${this.cap("注释")}</section>
      <section class="panel layer"><div class="body">
        ${bigBtn("layers", ["图层", "特性"])}
        <div class="lyr">
          <label class="combo">
            ${icon24(svg`<circle cx="12" cy="9" r="7.500" fill="#fbc978"/><path d="M8 14H16V17H8Z" fill="#fbc978"/><rect x="8.500" y="18" width="7" height="5" rx="2" fill="#fff"/>`)}
            ${icon24(rays(12, 12, 7, "#fbc978"))}
            ${icon24(svg`<rect x="3" y="10" width="17" height="13" fill="#fbc978"/><path d="M15 10V5a4 4 0 0 1 8 0V9" fill="none" stroke="#fbc978" stroke-width="2.500"/><path d="M11.500 14V19" stroke="#444" stroke-width="1.500"/>`)}
            <i class="sw"></i>
            <select aria-label="图层"><option>0</option></select><i class="car l"></i>
          </label>
          <div class="row">${["lyOff", "lyIso", "lyFrz", "lyLock", "lyCur"].map((n) => sm(n, n))}</div>
          <div class="row">${["lyOn", "lyUni", "lyThaw", "lyUnl", "lyMatch"].map((n) => sm(n, n))}</div>
        </div>
      </div>${this.cap("图层")}</section>
      <section class="panel block"><div class="body">
        ${bigBtn("insert", ["插入"])}
        <div class="cols c-blk">${sm("blkNew", "创建块")}<i></i>${sm("blkEdit", "编辑块")}<i></i>${sm("blkAttr", "编辑属性")}${dropBtn("属性列表")}</div>
      </div>${this.cap("块")}</section>
      <section class="panel prop"><div class="body">
        ${bigBtn("match", ["特性", "匹配"])}
        <div class="cols c-prop">${sm("wheel", "颜色")}${sm("weights", "线宽")}${sm("types", "线型")}</div>
        <div class="combos">
          <label class="combo"><i class="csw"></i><select aria-label="颜色"><option>ByLayer</option></select><i class="car l"></i></label>
          <label class="combo"><i class="cln"></i><select aria-label="线宽"><option>ByLayer</option></select><i class="car l"></i></label>
          <label class="combo"><i class="cln"></i><select aria-label="线型"><option>ByLayer</option></select><i class="car l"></i></label>
        </div>
      </div><button class="cap"><span class="lead">特性</span><i class="car l"></i><svg class="corner" width="14" height="10" viewBox="0 0 14 10"><path d="M2 1L8 7" stroke="#fff" stroke-width="1.500"/><path d="M9 2V9H2Z" fill="#fff"/></svg></button></section>
      <section class="panel grp"><div class="body">
        ${bigBtn("group", ["组"])}
        <div class="cols c-one">${sm("ungroup", "解除编组")}${sm("grpEdit", "组编辑")}${sm("grpSel", "启用组选择", true)}</div>
      </div>${this.cap("组")}</section>
      <section class="panel util"><div class="body">
        ${bigBtn("measure", ["测量"], true)}
        <div class="cols c-one">${sm("quick", "快速选择")}${sm("selAll", "全部选择")}${sm("calc", "计算器")}</div>
      </div>${this.cap("实用工具")}</section>
      <button class="clip">${icon48(big.paste)}<span>剪贴板</span><i class="car l"></i></button>
      <section class="panel view"><div class="body">${bigBtn("base", ["基点"], true)}</div>
        <button class="cap">视图<i class="car l"></i><svg width="10" height="10" viewBox="0 0 10 10"><path d="M1 1L7 7" stroke="#fff" stroke-width="1.500"/><path d="M8 2V9H1Z" fill="#fff"/></svg></button></section>
    </div>`;
  }

  private drawing() {
    const minor = [1, 2, 3, 4].map((i) => 28.920 * i);
    return html`<svg class="sheet" role="img" aria-label="环形阵列图形">
      <defs><pattern id="g" x="20" y="121" width="144.600" height="144.600" patternUnits="userSpaceOnUse">
        ${minor.map((m) => svg`<path d=${`M${m} 0V145M0 ${m}H145`} stroke="#262b37"/>`)}
        <path d="M.500 0V145M0 .500H145" stroke="#2f3541"/>
      </pattern></defs>
      <rect width="100%" height="100%" fill="url(#g)"/>
      <text transform="translate(838 399) rotate(-45)" font-size="46" fill="#313642" font-family="Noto Sans CJK SC, sans-serif">『育设学堂』出品</text>
      ${rosette(583.300, 232.300)}${rosette(1138.300, 240.200)}
      <g stroke="#dfe3ee" fill="#fff" stroke-width="1.300">
        <path d="M453 64V232" stroke-width="1.500" stroke="#b9bcc6"/><path d="M713.500 64V232M453 71.500H713"/>
        <path d="M453 71.500L468 68.500V74.500ZM713 71.500L698 68.500V74.500Z" stroke="none"/>
        <path d="M654.300 148L512 316"/>
        <path d="M0 0L-15 -3.500V3.500Z" transform="translate(654.300 148) rotate(-49.800)" stroke="none"/>
        <path d="M0 0L15 -3.500V3.500Z" transform="translate(512 316.500) rotate(-49.800)" stroke="none"/>
      </g>
      <g fill="#fff" font-family="Liberation Sans, sans-serif" font-size="20" text-anchor="middle">
        <text x="582.500" y="67">90</text><text transform="translate(580 231) rotate(-49.800)">Ø76</text>
      </g>
      <path d="M1305.500 220.500H1344M1362 220.500H1401.500M1353.500 172.500V211M1353.500 230V268.500M1344.500 211.500H1362.500V229.500H1344.500Z" stroke="#fff" fill="none"/>
      <path d="M17.500 569V644.500H93M11.500 637.500H24.500V650.500H11.500Z" stroke="#e8eaf0" fill="none"/>
      <g fill="#e8eaf0" font-family="Inter, sans-serif" font-weight="200" font-size="27" text-anchor="middle"><text x="28.500" y="565">Y</text><text x="106.500" y="643">X</text></g>
    </svg>`;
  }

  private canvas() {
    return html`<main class="canvas">
      ${this.drawing()}
      <div class="vp">[−][俯视][二维线框]</div>
      <div class="cubebox">
        <svg width="120" height="134" viewBox="0 0 120 134" font-family="Noto Sans CJK SC, sans-serif" font-size="17" text-anchor="middle" fill="#b4b7bf">
          <circle cx="60" cy="67" r="50" fill="none" stroke="#454a55" stroke-width="12"/>
          <rect x="36" y="43" width="48" height="47" fill="#a2a5ae" stroke="#b4b7c0"/><rect x="45" y="52" width="30" height="29" fill="#989ca2"/>
          <text x="60" y="21">北</text><text x="60" y="127">南</text><text x="8" y="74">西</text><text x="112" y="74">东</text>
          <text x="60" y="76" font-size="28" fill="#3c4048" font-weight="300">上</text>
        </svg>
        <button class="wcs">WCS<i class="car"></i></button>
      </div>
      <div class="nav">
        <svg width="46" height="311" viewBox="0 0 46 311" fill="none" stroke="#444950" stroke-width="2">
          <g stroke-width="1.500"><circle cx="37" cy="7" r="5"/><path d="M34 5L40 9M40 5L34 9"/><circle cx="37" cy="301" r="5"/><path d="M34 300H40M34 303H40"/></g>
          <path d="M24 25H39V41A16 16 0 1 1 24 25Z"/><circle cx="23" cy="41" r="9"/><path d="M16 47L10 51M30 47L36 51"/>
          <path d="M18 117C12 112 9 108 6 105C8 103 12 105 14 107L13 94C15 92 18 93 18 96L19 102V90C21 87 24 88 24 91V102L27 90C30 88 32 90 31 93L30 103L34 95C37 94 38 96 37 99L34 112L30 122H20Z" fill="#6a6e75" stroke-width="1.500"/>
          <path d="M7 132L30 154M29 132L6 154M6 136V131H11M25 131H30V136M6 149V154H11"/><circle cx="30" cy="152" r="7" fill="#6a6e75"/><path d="M35 157L41 163" stroke-width="4"/>
          <path d="M19 219V195H15L23 187L30 195H26V219Z" fill="#6a6e75" stroke-width="1.500"/><path d="M19 201C2 203 3 210 19 212M26 201C44 203 44 211 26 212M14 208L9 212L14 216"/>
          <path d="M6 250H14V260H6ZM18 250H27V260H18ZM30 250H39V260H30ZM6 264H30V284H6Z"/><path d="M13 268L23 274L13 280Z" fill="#444950" stroke="none"/>
          <path d="M20 70H27L23.500 74ZM20 175H27L23.500 179ZM20 232H27L23.500 236Z" fill="#33373e" stroke="none"/><path d="M6 81H40" stroke="#686c73" stroke-width="1"/>
        </svg>
      </div>
      <div class="cli">
        ${[0, 1, 2].map((i) => html`<div class="hist h${i}"><div>${mixed(HISTORY)}</div><div>${mixed("出(X)] <退出>:")}</div></div>`)}
        <div class="cmd">
          <div class="tool"><i class="grip"></i>
            <button aria-label="关闭"><svg width="13" height="13" viewBox="0 0 13 13"><path d="M1 1L12 12M12 1L1 12" stroke="#e8e8e8" stroke-width="2.500"/></svg></button>
            <button aria-label="自定义"><svg width="22" height="22" viewBox="0 0 22 22"><path d="M1 4L5 8L8 6L7 2C12 0 14 5 12 9L21 18L18 21L9 12C4 13 0 9 1 4Z" fill="#d8d8d8"/></svg></button>
          </div>
          <button class="pr" aria-label="最近使用的命令"><svg width="22" height="20" viewBox="0 0 22 20"><rect x=".500" y=".500" width="21" height="19" rx="2" fill="#9599a3" stroke="#7a7d86"/><path d="M4 5L9 10L4 15M11 15H18" fill="none" stroke="#444850" stroke-width="2"/></svg>${caret}</button>
          <input aria-label="命令" placeholder="键入命令">
          <button class="up" aria-label="命令历史">${caret}</button>
        </div>
      </div>
      <i class="edge"></i>
    </main>`;
  }

  private b(name: string, on = false) {
    return html`<button class=${classMap({ on })} aria-label=${name}>${icon24(ui[name])}</button>`;
  }

  private status() {
    const d = html`<button class="cr" aria-label="列表">${caret}</button>`;
    const v = html`<i class="vr"></i>`;
    return html`<footer class="status">
      <div class="g coord">2110.5223, 1365.3672, 0.0000</div>
      <div class="g"><button class="mdl">模型</button></div>
      <div class="g">${this.b("grid", true)}${this.b("dots")}${d}</div>
      <div class="g">${this.b("infer")}${v}${this.b("dyn", true)}${v}${this.b("ortho")}${this.b("polar", true)}${d}${this.b("iso")}${d}${v}${this.b("track", true)}${this.b("osnap", true)}${d}${v}${this.b("lwt")}${v}${this.b("trans", true)}${v}${this.b("cycle")}${v}${this.b("cube")}${d}</div>
      <div class="g">${this.b("ucs", true)}${this.b("filter")}${d}${this.b("gizmo", true)}${d}</div>
      <div class="g">${this.b("annoA", true)}${this.b("annoB")}${this.b("annoC")}<button class="scale">1:1 / 100%${caret}</button></div>
      <div class="g">${this.b("gear")}${d}${v}${this.b("plus")}</div>
      <div class="g u"><label class="unit">${icon24(ui.ruler)}<select aria-label="单位"><option>小数</option></select></label>${d}${v}${this.b("props")}</div>
      <div class="g">${this.b("uilock")}${d}${v}${this.b("shapes")}</div>
      <div class="g">${this.b("gauge", true)}</div>
      <div class="g wide">${this.b("sync")}${this.b("warn")}</div>
      <div class="g end">${this.b("full")}${this.b("burger")}</div>
    </footer>`;
  }

  render() {
    return html`${this.header()}${this.ribbon()}
      <div class="files">
        <div class="ftab">3-15环形阵列*<button aria-label="关闭图形"><svg width="10" height="10" viewBox="0 0 10 10"><path d="M1 1L9 9M9 1L1 9" stroke="#4a4a4a" stroke-width="2.500"/></svg></button></div>
        <button class="add" aria-label="新图形"><svg width="12" height="12" viewBox="0 0 12 12"><path d="M6 0V12M0 6H12" stroke="#d0d0d0" stroke-width="3"/></svg></button>
      </div>
      ${this.canvas()}
      <div class="sheets">
        <button class="st sel">模型</button><button class="st">布局1</button><button class="st">布局2</button>
        <button class="add" aria-label="新建布局"><svg width="12" height="12" viewBox="0 0 12 12"><path d="M6 0V12M0 6H12" stroke="#d0d0d0" stroke-width="3"/></svg></button>
        <div class="dimbox">DIMSCALE:&lt;1:2&gt; DIMSTY:&lt;ISO-25&gt; STYLE:&lt;Standard&gt;</div>
      </div>
      ${this.status()}`;
  }
}
